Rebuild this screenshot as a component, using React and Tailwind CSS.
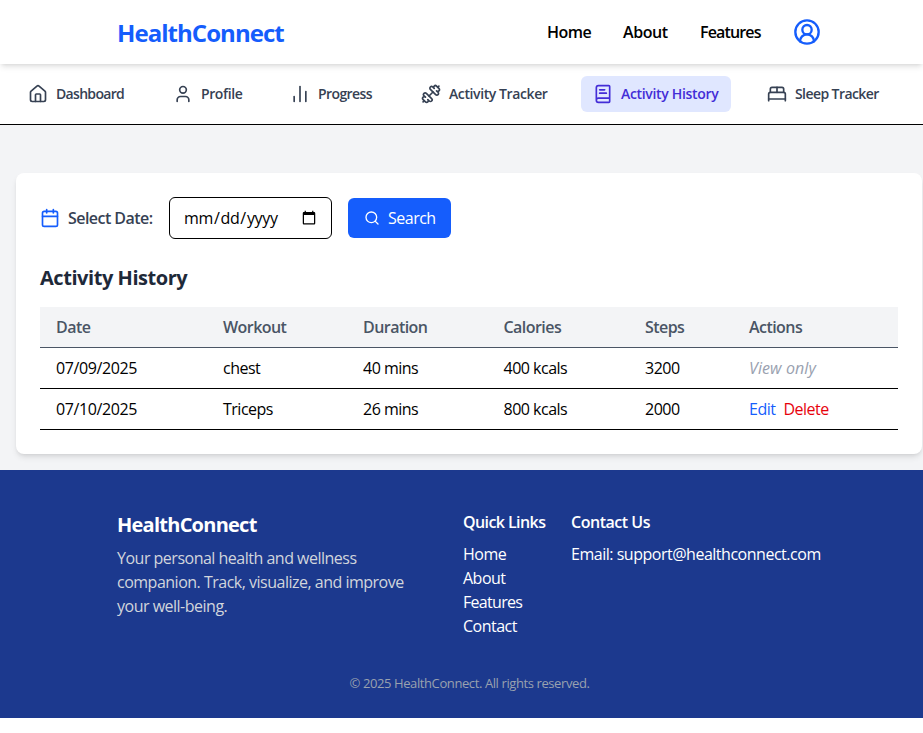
import {
  House,
  User,
  ChartNoAxesColumn,
  Dumbbell,
  BookText,
  BedDouble,
  CircleUserRound,
  Calendar,
  Search,
} from "lucide-react";

const tabs = [
  { label: "Dashboard", icon: House, size: "w-[121px] tracking-[-0.68px]" },
  { label: "Profile", icon: User, size: "w-[93px] tracking-[-0.4px]" },
  { label: "Progress", icon: ChartNoAxesColumn, size: "w-[107px] tracking-[-0.6px]" },
  { label: "Activity Tracker", icon: Dumbbell, size: "w-[148px] tracking-[-0.4px]" },
  { label: "Activity History", icon: BookText, size: "w-[150px] tracking-[-0.32px]", active: true },
  { label: "Sleep Tracker", icon: BedDouble, size: "w-[136px] tracking-[-0.58px]" },
];

const rows = [
  { date: "07/09/2025", workout: "chest", duration: "40 mins", calories: "400 kcals", steps: "3200" },
  { date: "07/10/2025", workout: "Triceps", duration: "26 mins", calories: "800 kcals", steps: "2000", editable: true },
];

function Header() {
  return (
    <header className="relative z-10 flex h-16 items-center bg-white pr-[102px] pl-[117px] shadow-md">
      <div className="mt-px text-2xl font-bold tracking-[-0.95px] text-blue-600">HealthConnect</div>
      <nav className="ml-auto flex items-center gap-8 font-semibold text-black">
        <a className="w-11 tracking-[-0.5px] whitespace-nowrap">Home</a>
        <a className="w-[45px] tracking-[-0.4px] whitespace-nowrap">About</a>
        <a className="w-[61px] tracking-[-0.85px] whitespace-nowrap">Features</a>
        <CircleUserRound className="size-7 text-blue-600" />
      </nav>
    </header>
  );
}

function TabBar() {
  return (
    <nav className="flex h-[61px] items-center gap-6 border-b border-black bg-white px-4 pb-px">
      {tabs.map(({ label, icon: Icon, size, active }) => (
        <a
          key={label}
          className={`flex h-9 shrink-0 items-center gap-2 rounded-md px-3 text-sm font-semibold whitespace-nowrap ${size} ${
            active ? "bg-indigo-100 text-indigo-700" : "text-gray-700"
          }`}
        >
          <Icon className="size-5 shrink-0" />
          {label}
        </a>
      ))}
    </nav>
  );
}

function HistoryCard() {
  return (
    <section className="h-[281px] w-[906px] shrink-0 rounded-lg bg-white p-6 shadow-md">
      <div className="flex h-[42px] items-center">
        <Calendar className="size-5 text-blue-600" />
        <label className="ml-2 w-[101px] font-semibold tracking-[-0.55px] whitespace-nowrap text-gray-700">Select Date:</label>
        <input type="date" className="h-[42px] w-[163px] rounded-md border border-black pr-3 pl-[13px] tracking-[-0.35px] text-black" />
        <button className="ml-4 flex h-10 w-[103px] items-center gap-2 rounded-md bg-blue-600 px-4 tracking-[-0.5px] text-white">
          <Search className="size-4 shrink-0" />
          Search
        </button>
      </div>
      <h2 className="mt-[25px] mb-[15px] text-xl leading-7 font-bold tracking-[-0.45px] text-gray-800">Activity History</h2>
      <table className="w-[858px] table-fixed border-collapse text-left">
        <colgroup>
          <col className="w-[167px]" />
          <col className="w-[140px]" />
          <col className="w-[140.5px]" />
          <col className="w-[141.5px]" />
          <col className="w-[104px]" />
          <col className="w-[165px]" />
        </colgroup>
        <thead>
          <tr className="h-10 border-b border-gray-600 bg-gray-100 tracking-[-0.55px] text-gray-600">
            {["Date", "Workout", "Duration", "Calories", "Steps", "Actions"].map((name) => (
              <th key={name} className="px-4 pt-2 pb-[7px] font-semibold">{name}</th>
            ))}
          </tr>
        </thead>
        <tbody>
          {rows.map((row) => (
            <tr key={row.date} className="h-[41px] border-b border-black tracking-[-0.5px] text-black">
              <td className="px-4 py-2 tracking-[-0.38px]">{row.date}</td>
              <td className="px-4 py-2">{row.workout}</td>
              <td className="px-4 py-2">{row.duration}</td>
              <td className="px-4 py-2">{row.calories}</td>
              <td className="px-4 py-2">{row.steps}</td>
              <td className="px-4 py-2">
                {row.editable ? (
                  <div className="flex gap-2">
                    <button className="text-blue-600">Edit</button>
                    <button className="text-red-600">Delete</button>
                  </div>
                ) : (
                  <span className="tracking-[0.1px] text-gray-400 italic">View only</span>
                )}
              </td>
            </tr>
          ))}
        </tbody>
      </table>
    </section>
  );
}

function Footer() {
  return (
    <footer className="h-[248px] bg-blue-900 pt-10 pl-[117px] text-white">
      <div className="flex">
        <div className="w-[346px]">
          <h3 className="mb-2 pt-px text-xl leading-[27px] font-bold tracking-[-0.75px]">HealthConnect</h3>
          <p className="tracking-[-0.5px] whitespace-nowrap text-gray-300">
            Your personal health and wellness
            <br />
            companion. Track, visualize, and improve
            <br />
            your well-being.
          </p>
        </div>
        <div className="w-[108px]">
          <h4 className="mb-2 font-semibold tracking-[-0.58px]">Quick Links</h4>
          <ul className="tracking-[-0.5px]">
            <li>Home</li>
            <li>About</li>
            <li className="tracking-[-0.7px]">Features</li>
            <li>Contact</li>
          </ul>
        </div>
        <div>
          <h4 className="mb-2 font-semibold tracking-[-0.48px]">Contact Us</h4>
          <p className="tracking-[-0.48px]">Email: support@healthconnect.com</p>
        </div>
      </div>
      <p className="mt-[35px] w-[705px] text-center text-[13px] leading-5 tracking-[-0.4px] text-gray-400">
        © 2025 HealthConnect. All rights reserved.
      </p>
    </footer>
  );
}

export default function App() {
  return (
    <div className="h-[733px] w-full overflow-hidden bg-white font-['Open_Sans','Noto_Sans',sans-serif]">
      <Header />
      <TabBar />
      <main className="flex h-[345px] items-start overflow-hidden bg-gray-100 px-4 pt-12">
        <HistoryCard />
      </main>
      <Footer />
    </div>
  );
}
